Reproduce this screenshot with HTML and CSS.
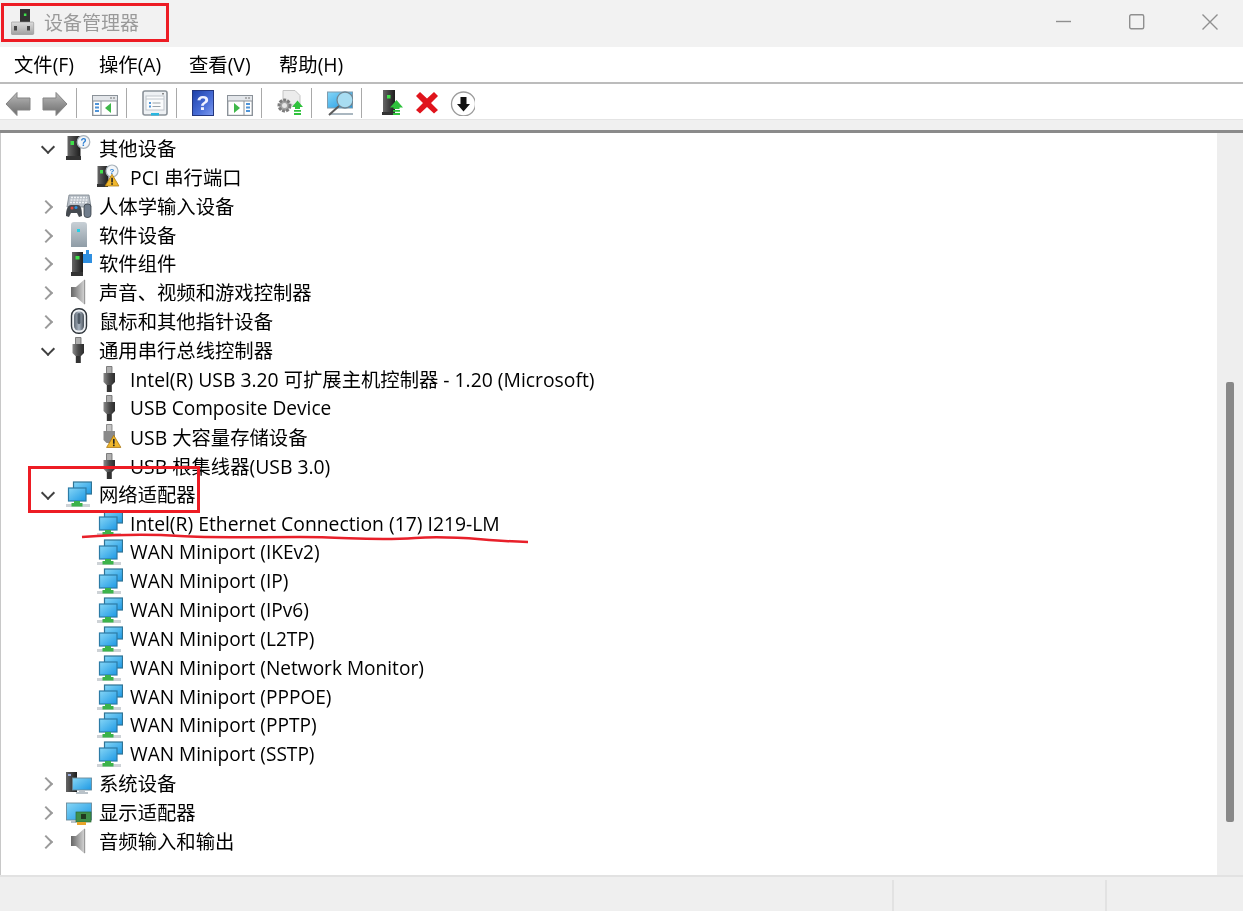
FILE: index.html
```html
<!DOCTYPE html>
<html lang="zh-CN">
<head>
<meta charset="utf-8">
<title>设备管理器</title>
<link rel="stylesheet" href="styles.css">
</head>
<body>
<svg class="sprite" width="0" height="0" aria-hidden="true">
  <defs>
    <linearGradient id="gArrow" x1="0" y1="0" x2="0" y2="1"><stop offset="0" stop-color="#bcbcbc"/><stop offset=".5" stop-color="#929292"/><stop offset="1" stop-color="#6c6c6c"/></linearGradient>
    <linearGradient id="gScreen" x1="0" y1="0" x2="1" y2="1"><stop offset="0" stop-color="#86d6f6"/><stop offset="1" stop-color="#1c98e4"/></linearGradient>
    <linearGradient id="gHelp" x1="0" y1="0" x2="1" y2="1"><stop offset="0" stop-color="#1c3fa8"/><stop offset=".6" stop-color="#4a6fd8"/><stop offset="1" stop-color="#7f9cf0"/></linearGradient>
    <linearGradient id="gTower" x1="0" y1="0" x2="1" y2="0"><stop offset="0" stop-color="#666"/><stop offset="1" stop-color="#1c1c1c"/></linearGradient>
    <linearGradient id="gPlug" x1="0" y1="0" x2="1" y2="0"><stop offset="0" stop-color="#8a8a8a"/><stop offset=".5" stop-color="#4c4c4c"/><stop offset="1" stop-color="#2c2c2c"/></linearGradient>
    <linearGradient id="gSpeaker" x1="0" y1="0" x2="1" y2="0"><stop offset="0" stop-color="#666"/><stop offset=".55" stop-color="#a4a4a4"/><stop offset="1" stop-color="#d8d8d8"/></linearGradient>
    <linearGradient id="gSoft" x1="0" y1="0" x2="0" y2="1"><stop offset="0" stop-color="#c8d0d6"/><stop offset="1" stop-color="#8f9ca6"/></linearGradient>
    <linearGradient id="gMouse" x1="0" y1="0" x2="1" y2="0"><stop offset="0" stop-color="#5f6974"/><stop offset=".5" stop-color="#aab5c2"/><stop offset="1" stop-color="#4a525c"/></linearGradient>
    <linearGradient id="gBase" x1="0" y1="0" x2="0" y2="1"><stop offset="0" stop-color="#dcdcdc"/><stop offset="1" stop-color="#a2a2a2"/></linearGradient>

    <symbol id="i-other" viewBox="0 0 26 26"><path d="M1.500 1h13v20h-13z" fill="url(#gTower)"/><rect x="4.500" y="6" width="3.500" height="4" fill="#3fe04a"/><path d="M0 21h15v4H0z" fill="#333"/><circle cx="17.500" cy="7" r="6.300" fill="#f2f5f8" stroke="#a9b2ba" stroke-width="1.200"/><text x="17.500" y="10.500" class="glyph" font-size="10" fill="#2b7fd4">?</text></symbol>

    <symbol id="i-warnmark" viewBox="0 0 16 14"><path d="M8 .8 15.400 13.400H.6z" fill="#f0b72c" stroke="#a8750f" stroke-width=".8"/><rect x="7.200" y="4.600" width="1.700" height="5" fill="#222"/><rect x="7.200" y="10.400" width="1.700" height="1.700" fill="#222"/></symbol>

    <symbol id="i-pci" viewBox="0 0 26 26"><path d="M.5 2h11v18H.5z" fill="url(#gTower)"/><rect x="3" y="6" width="3" height="3.500" fill="#3fe04a"/><path d="M0 20h11v3H0z" fill="#333"/><circle cx="15" cy="7" r="6" fill="#f2f5f8" stroke="#a9b2ba" stroke-width="1.200"/><text x="15" y="9.500" class="glyph" font-size="8" fill="#2b7fd4">?</text><use href="#i-warnmark" x="7.500" y="9" width="15" height="14"/></symbol>

    <symbol id="i-hid" viewBox="0 0 26 26"><path d="M3 2h20l2 12H1z" fill="#b7bec6" stroke="#7a838c" stroke-width=".8"/><path d="M5 4.500h16M4.500 7h17M4 9.500h18" stroke="#eef1f4" stroke-width="1.300" stroke-dasharray="2 1"/><path d="M0 23c0-7 2-11 5-11h7c3 0 4 4 4 11l-3 1-2-4H5l-2 4z" fill="#454a50"/><circle cx="6" cy="15" r="1.500" fill="#e0483c"/><circle cx="10" cy="14.500" r="1.500" fill="#2e8fe0"/><rect x="18" y="11" width="7" height="13.500" rx="3" fill="#707d8c" stroke="#384048" stroke-width=".8"/></symbol>

    <symbol id="i-soft" viewBox="0 0 26 26"><path d="M5 3q0-3 3-3h10q3 0 3 3v22H5z" fill="url(#gSoft)"/><rect x="11" y="7" width="3" height="3" fill="#21d0e8"/></symbol>

    <symbol id="i-comp" viewBox="0 0 26 26"><path d="M6 2h11v20H6z" fill="url(#gTower)"/><rect x="9.500" y="6" width="4" height="3.500" fill="#3fe04a"/><path d="M5 22h12v4H5z" fill="#333"/><path d="M17 4h3V0h3v4h3v9h-9z" fill="#2f8fe0"/></symbol>

    <symbol id="i-speaker" viewBox="0 0 26 26"><path d="M5 8h5l9-8v26l-9-8H5z" fill="url(#gSpeaker)"/><path d="M18.700 1v24" stroke="#777" stroke-width=".8"/></symbol>

    <symbol id="i-mouse" viewBox="0 0 26 26"><rect x="5.500" y=".8" width="15" height="24.500" rx="7" fill="#eef1f4" stroke="#2e343a" stroke-width="1.400"/><rect x="8" y="3.500" width="10" height="19" rx="4.500" fill="url(#gMouse)"/><rect x="11.500" y="5" width="3" height="11" rx="1.500" fill="#4f5a66"/></symbol>

    <symbol id="i-usb" viewBox="0 0 26 26"><path d="M9.500 .5h5.500v7H9.500z" fill="#b0b0b0" stroke="#666" stroke-width=".8"/><path d="M6.500 7h11.500v9l-3 3H9.500l-3-3z" fill="url(#gPlug)"/><path d="M9.800 19h5v7h-5z" fill="#333"/></symbol>

    <symbol id="i-usbwarn" viewBox="0 0 26 26"><path d="M9.500 .5h5.500v7H9.500z" fill="#c4c4c4" stroke="#777" stroke-width=".8"/><path d="M6.500 7h11.500v9l-3 3H9.500l-3-3z" fill="#8a8a8a"/><use href="#i-warnmark" x="9" y="10" width="15.500" height="14.500"/></symbol>

    <symbol id="i-net" viewBox="0 0 26 26"><rect x="7.500" y="1" width="18" height="12" fill="url(#gScreen)" stroke="#2f7394" stroke-width="1.200"/><rect x="2.500" y="7" width="17.500" height="13" fill="url(#gScreen)" stroke="#2c7ba6" stroke-width="1.200"/><path d="M0 23h24v3H0z" fill="#cdd2d6"/><path d="M8 20h6v2h2.500v3.500H5.500V22H8z" fill="#3cb34a"/></symbol>

    <symbol id="i-sys" viewBox="0 0 26 26"><path d="M0 2h11v20H0z" fill="url(#gTower)"/><rect x="2" y="4" width="3" height="2" fill="#9ad"/><rect x="6.500" y="8" width="19" height="12" fill="url(#gScreen)" stroke="#6b8a9a" stroke-width=".9"/><path d="M13 20h6v2h3v2H10v-2h3z" fill="#b9c2c9"/></symbol>

    <symbol id="i-disp" viewBox="0 0 26 26"><rect x=".5" y="4" width="25" height="17" fill="url(#gScreen)" stroke="#6b8a9a" stroke-width=".9"/><path d="M5 21h5v3H5z" fill="#b9c2c9"/><rect x="10" y="13" width="15" height="10" fill="#3f8f4a" stroke="#2d6a36" stroke-width=".7"/><rect x="15" y="15" width="5" height="5" fill="#22391f"/><path d="M11 23h9v3h-9z" fill="#e9a52a"/></symbol>

    <symbol id="t-back" viewBox="0 0 26 26"><path d="M1 14 12 2.500V8h13v12H12v5.500z" fill="url(#gArrow)" stroke="#858585" stroke-width="1"/></symbol>
    <symbol id="t-forward" viewBox="0 0 26 26"><path d="M25 14 14 2.500V8H1v12h13v5.500z" fill="url(#gArrow)" stroke="#858585" stroke-width="1"/></symbol>

    <symbol id="t-tree" viewBox="0 0 26 26"><rect x=".7" y="5.700" width="24.600" height="19.800" fill="#fff" stroke="#8b9299" stroke-width="1.400"/><rect x="1" y="6" width="24" height="5" fill="#e3e6ea"/><path d="M1 11h24" stroke="#8b9299"/><path d="M18 8h2M21 8h2" stroke="#777" stroke-width="1.200"/><path d="M9 11v14" stroke="#8b9299"/><path d="M3 14h4M3 17.500h4M3 21h4" stroke="#4f94d8" stroke-width="2"/><path d="M19 13v10l-6-5z" fill="#3fb84a"/></symbol>

    <symbol id="t-action" viewBox="0 0 26 26"><rect x=".7" y="5.700" width="24.600" height="19.800" fill="#fff" stroke="#8b9299" stroke-width="1.400"/><rect x="1" y="6" width="24" height="5" fill="#e3e6ea"/><path d="M1 11h24" stroke="#8b9299"/><path d="M18 8h2M21 8h2" stroke="#777" stroke-width="1.200"/><path d="M17 11v14" stroke="#8b9299"/><path d="M19 14h4M19 17.500h4M19 21h4" stroke="#4f94d8" stroke-width="2"/><path d="M7 13v10l6-5z" fill="#3fb84a"/></symbol>

    <symbol id="t-props" viewBox="0 0 26 26"><rect x="1" y="1" width="24" height="24" rx="2" fill="#eef1f4" stroke="#8b9299" stroke-width="1.600"/><path d="M21 3v1.500" stroke="#666" stroke-width="1.500"/><rect x="4" y="6" width="18" height="14" fill="#fbfcfd" stroke="#c0c6cc"/><path d="M4 9h18" stroke="#c0c6cc"/><rect x="7" y="12" width="2" height="2" fill="#4f94d8"/><rect x="7" y="15.500" width="2" height="2" fill="#4f94d8"/><path d="M10.500 13h8M10.500 16.500h8" stroke="#9aa2aa" stroke-width="1.200"/><rect x="9" y="23" width="8" height="2.500" fill="#28b6e0"/></symbol>

    <symbol id="t-help" viewBox="0 0 26 26"><rect x="2.500" y=".5" width="21" height="25" fill="url(#gHelp)" stroke="#23367e" stroke-width="1"/><text x="13" y="20" class="glyph" font-size="21" fill="#f0f2ff">?</text></symbol>

    <symbol id="t-driver" viewBox="0 0 26 26"><path d="M6 .5h12l5 5V15H6z" fill="#ececec" stroke="#c4c4c4"/><circle cx="7.500" cy="15.500" r="5.500" fill="#a4a4a4" stroke="#7c7c7c" stroke-dasharray="2.800 1.200" stroke-width="3"/><circle cx="7.500" cy="15.500" r="2.500" fill="#e6e6e6"/><path d="M20.500 10.500l5.500 6.500h-3v2h-5v-2h-3z" fill="#2fc23c"/><path d="M17 20.800h7M17 24h7" stroke="#2fc23c" stroke-width="1.800"/></symbol>

    <symbol id="t-scan" viewBox="0 0 26 26"><rect x=".5" y="2" width="25" height="16" fill="url(#gScreen)" stroke="#7f9cae"/><path d="M3 24h23" stroke="#aab7c0" stroke-width="2"/><circle cx="18" cy="10" r="8" fill="#a8ddf2" stroke="#6f8694" stroke-width="1.300"/><path d="M12 16 2 25" stroke="#5b5b5b" stroke-width="2"/></symbol>

    <symbol id="t-update" viewBox="0 0 26 26"><path d="M4 0h12v22H4z" fill="url(#gTower)"/><rect x="8" y="5" width="3.500" height="3.500" fill="#3fe04a"/><path d="M3 22h13v3H3z" fill="#333"/><path d="M17.500 10l6.500 7.500h-3.500v1.500h-6v-1.500H11z" fill="#2fc23c"/><path d="M14 20.800h7M14 24h7" stroke="#2fc23c" stroke-width="1.800"/></symbol>

    <symbol id="t-delete" viewBox="0 0 26 26"><path d="M2 6 6 2l7 6.500L20 2l4 4-7 7 7 7-4 3.500-7-6.500-7 6.500L2 20l7-7z" fill="#e0141c"/></symbol>

    <symbol id="t-disable" viewBox="0 0 26 26"><circle cx="14.500" cy="14" r="12" fill="#fff" stroke="#9c9c9c" stroke-width="1.300"/><path d="M11.500 7h6v7h3.500l-6.500 7.500L8 14h3.500z" fill="#111"/></symbol>
  </defs>
</svg>

<div class="window">
  <header class="titlebar">
    <svg class="app-icon" viewBox="0 0 24 26" aria-hidden="true">
      <rect x="9" y="0" width="10" height="14" fill="#333"/>
      <rect x="12.900" y="4.500" width="2.500" height="2.500" fill="#3fe04a"/>
      <rect x=".3" y="13" width="22.400" height="12.500" rx="1" fill="url(#gBase)" stroke="#8f8f8f" stroke-width=".6"/>
      <rect x="3" y="17" width="3" height="4.500" fill="#444"/>
      <rect x="16" y="17" width="3" height="4.500" fill="#444"/>
    </svg>
    <span class="title">设备管理器</span>
    <div class="controls">
      <svg class="ctrl" viewBox="0 0 16 16" aria-hidden="true"><path d="M0 7.500h15" /></svg>
      <svg class="ctrl" viewBox="0 0 16 16" aria-hidden="true"><rect x=".7" y=".7" width="14" height="14" rx="1.500"/></svg>
      <svg class="ctrl" viewBox="0 0 16 16" aria-hidden="true"><path d="M.5.500l15 15M15.500.500l-15 15"/></svg>
    </div>
  </header>

  <nav class="menubar">
    <span class="menu">文件(F)</span>
    <span class="menu">操作(A)</span>
    <span class="menu">查看(V)</span>
    <span class="menu">帮助(H)</span>
  </nav>

  <div class="toolbar">
    <svg class="tool"><use href="#t-back"/></svg>
    <svg class="tool tool-next"><use href="#t-forward"/></svg>
    <i class="sep"></i>
    <svg class="tool"><use href="#t-tree"/></svg>
    <i class="sep"></i>
    <svg class="tool"><use href="#t-props"/></svg>
    <i class="sep sep-tight"></i>
    <svg class="tool"><use href="#t-help"/></svg>
    <svg class="tool tool-next"><use href="#t-action"/></svg>
    <i class="sep"></i>
    <svg class="tool"><use href="#t-driver"/></svg>
    <i class="sep"></i>
    <svg class="tool"><use href="#t-scan"/></svg>
    <i class="sep sep-wide"></i>
    <svg class="tool"><use href="#t-update"/></svg>
    <svg class="tool tool-near"><use href="#t-delete"/></svg>
    <svg class="tool tool-near"><use href="#t-disable"/></svg>
  </div>
  <div class="toolbar-foot"></div>

  <main class="content">
    <ul class="tree">
      <li class="row"><b class="twist open"></b><svg class="icon"><use href="#i-other"/></svg><span>其他设备</span></li>
      <li class="row child"><svg class="icon"><use href="#i-pci"/></svg><span>PCI 串行端口</span></li>
      <li class="row"><b class="twist"></b><svg class="icon"><use href="#i-hid"/></svg><span>人体学输入设备</span></li>
      <li class="row"><b class="twist"></b><svg class="icon"><use href="#i-soft"/></svg><span>软件设备</span></li>
      <li class="row"><b class="twist"></b><svg class="icon"><use href="#i-comp"/></svg><span>软件组件</span></li>
      <li class="row"><b class="twist"></b><svg class="icon"><use href="#i-speaker"/></svg><span>声音、视频和游戏控制器</span></li>
      <li class="row"><b class="twist"></b><svg class="icon"><use href="#i-mouse"/></svg><span>鼠标和其他指针设备</span></li>
      <li class="row"><b class="twist open"></b><svg class="icon"><use href="#i-usb"/></svg><span>通用串行总线控制器</span></li>
      <li class="row child"><svg class="icon"><use href="#i-usb"/></svg><span>Intel(R) USB 3.20 可扩展主机控制器 - 1.20 (Microsoft)</span></li>
      <li class="row child latin"><svg class="icon"><use href="#i-usb"/></svg><span>USB Composite Device</span></li>
      <li class="row child"><svg class="icon"><use href="#i-usbwarn"/></svg><span>USB 大容量存储设备</span></li>
      <li class="row child"><svg class="icon"><use href="#i-usb"/></svg><span>USB 根集线器(USB 3.0)</span></li>
      <li class="row"><b class="twist open"></b><svg class="icon"><use href="#i-net"/></svg><span>网络适配器</span></li>
      <li class="row child"><svg class="icon"><use href="#i-net"/></svg><span>Intel(R) Ethernet Connection (17) I219-LM</span></li>
      <li class="row child latin"><svg class="icon"><use href="#i-net"/></svg><span>WAN Miniport (IKEv2)</span></li>
      <li class="row child latin"><svg class="icon"><use href="#i-net"/></svg><span>WAN Miniport (IP)</span></li>
      <li class="row child latin"><svg class="icon"><use href="#i-net"/></svg><span>WAN Miniport (IPv6)</span></li>
      <li class="row child latin"><svg class="icon"><use href="#i-net"/></svg><span>WAN Miniport (L2TP)</span></li>
      <li class="row child latin"><svg class="icon"><use href="#i-net"/></svg><span>WAN Miniport (Network Monitor)</span></li>
      <li class="row child latin"><svg class="icon"><use href="#i-net"/></svg><span>WAN Miniport (PPPOE)</span></li>
      <li class="row child latin"><svg class="icon"><use href="#i-net"/></svg><span>WAN Miniport (PPTP)</span></li>
      <li class="row child latin"><svg class="icon"><use href="#i-net"/></svg><span>WAN Miniport (SSTP)</span></li>
      <li class="row"><b class="twist"></b><svg class="icon"><use href="#i-sys"/></svg><span>系统设备</span></li>
      <li class="row"><b class="twist"></b><svg class="icon"><use href="#i-disp"/></svg><span>显示适配器</span></li>
      <li class="row"><b class="twist"></b><svg class="icon"><use href="#i-speaker"/></svg><span>音频输入和输出</span></li>
    </ul>
    <div class="scrollbar"><div class="thumb"></div></div>
  </main>

  <footer class="statusbar">
    <div class="pane pane-main"></div>
    <div class="pane pane-mid"></div>
    <div class="pane pane-end"></div>
  </footer>

  <div class="mark mark-title"></div>
  <div class="mark mark-net"></div>
  <svg class="scribble" viewBox="0 0 1243 911" aria-hidden="true">
    <path d="M82 537C110 535 150 534 180 536S250 537 300 537 370 541 415 538 480 541 528 542"/>
  </svg>
</div>
</body>
</html>
```

FILE: styles.css
```css
* { box-sizing: border-box; }

html, body { margin: 0; height: 100%; overflow: hidden; background: #fff; }

.sprite { position: absolute; }

.glyph { font-family: "Liberation Sans", sans-serif; font-weight: 700; text-anchor: middle; }

.window {
  position: relative;
  display: flex;
  flex-direction: column;
  height: 911px;
  font-family: "Open Sans", "Noto Sans CJK SC", sans-serif;
  font-size: 19.33px;
  color: #000;
  filter: blur(.4px);
}

.titlebar {
  display: flex;
  align-items: center;
  flex: none;
  height: 47px;
  padding: 0 0 3px 11px;
  background: #f2f2f2;
}
.app-icon { width: 24px; height: 26px; }
.title { margin: 0 0 2px 9px; color: #9a9a9a; font-family: "Noto Sans CJK SC", sans-serif; font-size: 19px; }
.controls { display: flex; margin-left: auto; margin-right: 25px; gap: 57px; }
.ctrl { width: 16px; height: 16px; fill: none; stroke: #8f8f8f; stroke-width: 1.4; }

.menubar {
  display: flex;
  align-items: center;
  flex: none;
  height: 37px;
  padding: 0 0 2px 14px;
  background: #fff;
  border-bottom: 2px solid #bcbcbc;
}
.menu { flex: none; width: 90px; }
.menu:first-child { width: 85px; }

.toolbar {
  display: flex;
  align-items: center;
  flex: none;
  height: 36px;
  padding: 3px 0 0 5px;
  background: #fff;
  border-bottom: 1px solid #e4e4e4;
}
.tool { flex: none; width: 26px; height: 26px; }
.tool-next { margin-left: 11px; }
.tool-near { margin-left: 9px; }
.sep { flex: none; width: 1px; height: 30px; margin: 0 15px 0 8px; background: #a9a9a9; }
.sep-tight { margin-right: 13px; }
.sep-wide { margin-right: 17px; }

.toolbar-foot {
  flex: none;
  height: 13px;
  background: #f0f0f0;
  border-bottom: 3px solid #8a8a8a;
}

.content { display: flex; flex: 1; min-height: 0; background: #fff; border-left: 1px solid #c8c8c8; }

.tree { flex: 1; margin: 0; padding: .5px 0 0; list-style: none; }
.row { display: flex; align-items: center; height: 28.875px; padding-left: 40px; white-space: nowrap; }
.child { padding-left: 96px; }
.latin { font-size: 19.1px; }
.twist { position: relative; flex: none; width: 15px; height: 15px; }
.twist::before {
  content: "";
  position: absolute;
  left: 0;
  top: 3.500px;
  width: 8px;
  height: 8px;
  border-top: 2px solid #9a9a9a;
  border-right: 2px solid #9a9a9a;
  transform: rotate(45deg);
}
.twist.open::before {
  left: 1.500px;
  top: 1.500px;
  border-color: #404040;
  transform: rotate(135deg);
}
.icon { flex: none; width: 26px; height: 26px; margin-right: 7px; }
.row > .twist + .icon { margin-left: 10px; }

.scrollbar { flex: none; width: 26px; padding: 249px 0 0 9px; background: #eeeeee; }
.thumb { width: 8px; height: 440px; border-radius: 2px; background: #888; }

.statusbar {
  display: flex;
  flex: none;
  height: 36px;
  padding-top: 3px;
  background: #efefef;
  border-top: 2px solid #e2e2e2;
}
.pane-main { flex: none; width: 892px; }
.pane-mid { flex: none; width: 213px; border-left: 2px solid #e2e2e2; }
.pane-end { flex: 1; border-left: 2px solid #e2e2e2; }

.mark { position: absolute; border: 3px solid #ed1c24; }
.mark-title { left: 1px; top: 3px; width: 168px; height: 39px; }
.mark-net { left: 28px; top: 466px; width: 172px; height: 47px; }

.scribble { position: absolute; left: 0; top: 0; width: 1243px; height: 911px; fill: none; stroke: #e8202a; stroke-width: 2.5; pointer-events: none; }
```
